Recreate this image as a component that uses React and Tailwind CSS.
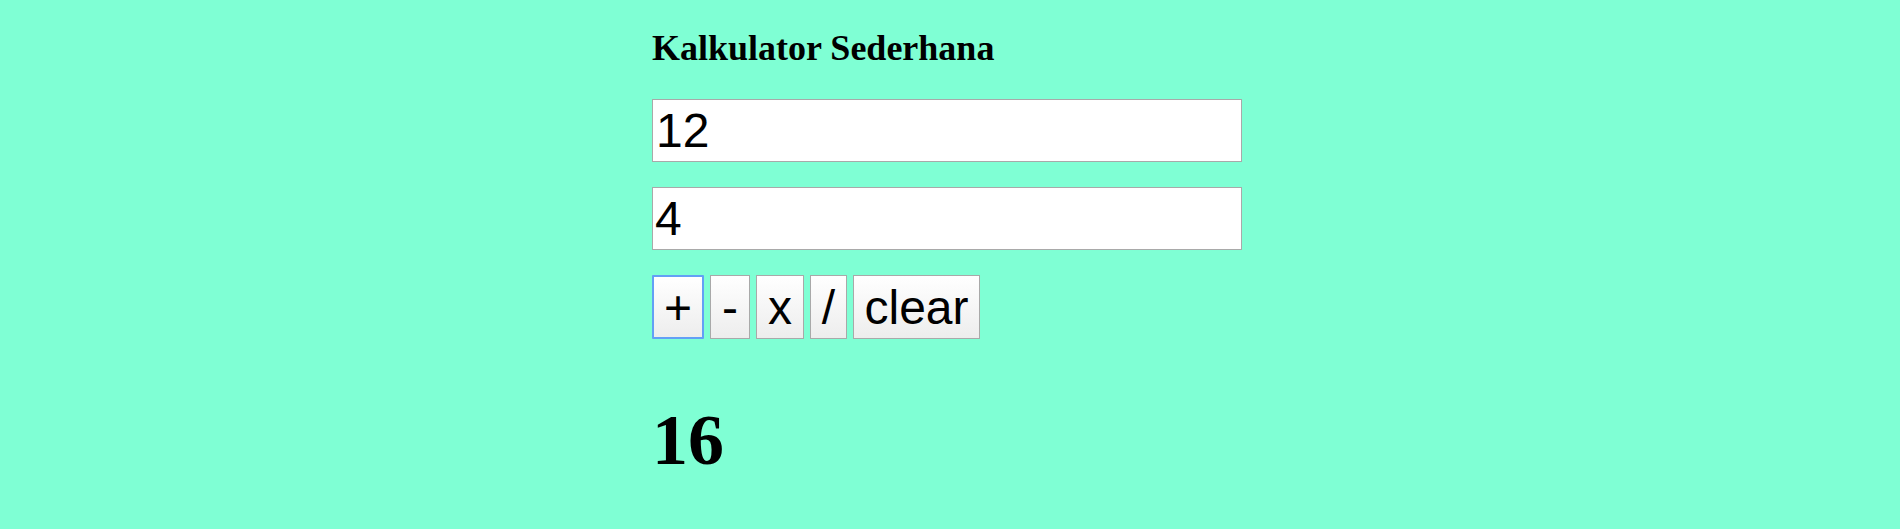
import React, { useState } from "react";

export default function App() {
  const [a, setA] = useState("12");
  const [b, setB] = useState("4");
  const [result, setResult] = useState("16");

  const calc = (op) => {
    const x = parseFloat(a);
    const y = parseFloat(b);
    if (isNaN(x) || isNaN(y)) return;
    let r = 0;
    if (op === "+") r = x + y;
    if (op === "-") r = x - y;
    if (op === "x") r = x * y;
    if (op === "/") r = x / y;
    setResult(String(r));
  };

  const clear = () => {
    setA("");
    setB("");
    setResult("");
  };

  const btn =
    "h-[64px] border border-[#a9a9a9] bg-gradient-to-b from-white to-[#ededed] text-black text-[48px] leading-[55px] flex items-center justify-center p-0 font-['Liberation_Sans',Arial,sans-serif]";

  return (
    <div className="min-h-screen bg-[#7fffd4]">
      <div className="w-[596px] mx-auto pt-[28px]">
        <h3 className="text-[36px] leading-[41px] font-bold text-black font-['Liberation_Serif','Times_New_Roman',serif]">
          Kalkulator Sederhana
        </h3>
        <input
          type="text"
          value={a}
          onChange={(e) => setA(e.target.value)}
          className="block mt-[30px] w-[590px] h-[63px] border border-[#a9a9a9] bg-white px-[3px] py-[3px] text-[48px] leading-[55px] text-black outline-none font-['Liberation_Sans',Arial,sans-serif]"
        />
        <input
          type="text"
          value={b}
          onChange={(e) => setB(e.target.value)}
          className="block mt-[25px] w-[590px] h-[63px] border border-[#a9a9a9] bg-white px-[2px] py-[3px] text-[48px] leading-[55px] text-black outline-none font-['Liberation_Sans',Arial,sans-serif]"
        />
        <div className="flex gap-[6px] mt-[25px]">
          <button
            onClick={() => calc("+")}
            className="h-[64px] w-[52px] border-2 border-[#63a0f5] rounded-[1px] bg-gradient-to-b from-white to-[#ededed] text-black text-[48px] leading-[55px] flex items-center justify-center p-0 font-['Liberation_Sans',Arial,sans-serif]"
          >
            +
          </button>
          <button onClick={() => calc("-")} className={btn + " w-[40px]"}>
            -
          </button>
          <button onClick={() => calc("x")} className={btn + " w-[48px]"}>
            x
          </button>
          <button onClick={() => calc("/")} className={btn + " w-[37px]"}>
            /
          </button>
          <button onClick={clear} className={btn + " w-[127px]"}>
            clear
          </button>
        </div>
        <h1 className="mt-[60px] text-[72px] leading-[83px] font-bold text-black font-['Liberation_Serif','Times_New_Roman',serif]">
          {result}
        </h1>
      </div>
    </div>
  );
}
